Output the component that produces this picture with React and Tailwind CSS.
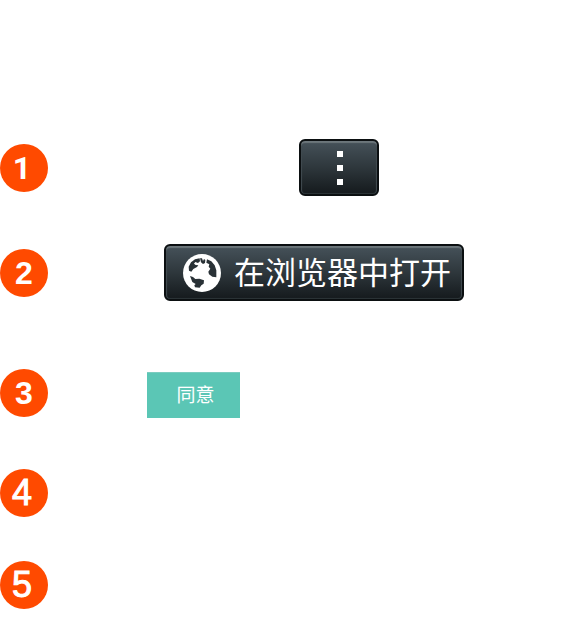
const darkButton =
  "flex h-[57px] items-center rounded-md border-2 border-[#0b0f11] bg-linear-to-b from-[#46525a] via-[#2e373c] to-[#151a1d] shadow-[inset_0_2px_1px_#6c767b,inset_1px_0_1px_#3d474d,inset_-1px_0_1px_#3d474d,inset_0_-1px_1px_#2a3135]";

const digitStyles = {
  plain: "font-['Roboto',sans-serif] text-[32px] font-bold pr-1",
  bold: "text-[32px] font-bold",
  large: "pr-1 text-[36px] [-webkit-text-stroke:1px_white]",
};

function Step({ number, digit, className = "", children }) {
  return (
    <li className={`flex ${className}`}>
      <span
        className={`flex size-12 shrink-0 items-center justify-center rounded-full bg-[#ff4a00] leading-none text-white ${digitStyles[digit]}`}
      >
        {number}
      </span>
      {children}
    </li>
  );
}

function GlobeIcon() {
  return (
    <svg viewBox="84 54 114 114" className="size-[38px] shrink-0" aria-hidden="true">
      <circle cx="141" cy="111" r="57" fill="#fff" />
      <g fill="#293136">
        <path d="M134 67 L120 70 L108 79 L101 92 L102 104 L109 107 L115 99 L126 93 L130 88 L122 87 L117 83 L121 78 L129 81 L135 76 Z" />
        <path d="M135 67 L141 67 L144 75 L147 69 L151 72 L150 81 L144 84 L138 79 Z" />
        <path d="M156 70 L169 76 L179 88 L184 103 L184 124 L172 122 L162 115 L160 107 L166 98 L161 92 L163 85 L154 80 Z" />
        <path d="M105 120 L114 123 L121 129 L133 128 L147 133 L146 143 L139 148 L134 155 L120 154 L118 148 L122 144 L112 138 Z" />
      </g>
    </svg>
  );
}

export default function App() {
  return (
    <main className="min-h-screen bg-white pt-[139px] pb-4 font-['Liberation_Sans','Noto_Sans_CJK_SC',sans-serif]">
      <ol className="flex flex-col">
        <Step number={1} digit="plain" className="items-center">
          <button type="button" aria-label="菜单" className={`${darkButton} ml-[251px] w-20 flex-col justify-center gap-2 pl-0.5`}>
            <span className="size-1.5 bg-white" />
            <span className="size-1.5 bg-white" />
            <span className="size-1.5 bg-white" />
          </button>
        </Step>
        <Step number={2} digit="bold" className="mt-12 items-center">
          <button type="button" className={`${darkButton} ml-[116px] w-[300px] gap-[13px] pl-[17px]`}>
            <GlobeIcon />
            <span className="whitespace-nowrap pt-0.5 text-[31px] leading-none text-white">在浏览器中打开</span>
          </button>
        </Step>
        <Step number={3} digit="bold" className="mt-[68px] items-start">
          <button
            type="button"
            className="mt-[3px] ml-[99px] h-[46px] w-[93px] border-t border-[#7accbf] bg-[#5bc6b5] pl-1 text-[19px] leading-none text-white"
          >
            同意
          </button>
        </Step>
        <Step number={4} digit="large" className="mt-[51px] items-center" />
        <Step number={5} digit="large" className="mt-11 items-center" />
      </ol>
    </main>
  );
}
